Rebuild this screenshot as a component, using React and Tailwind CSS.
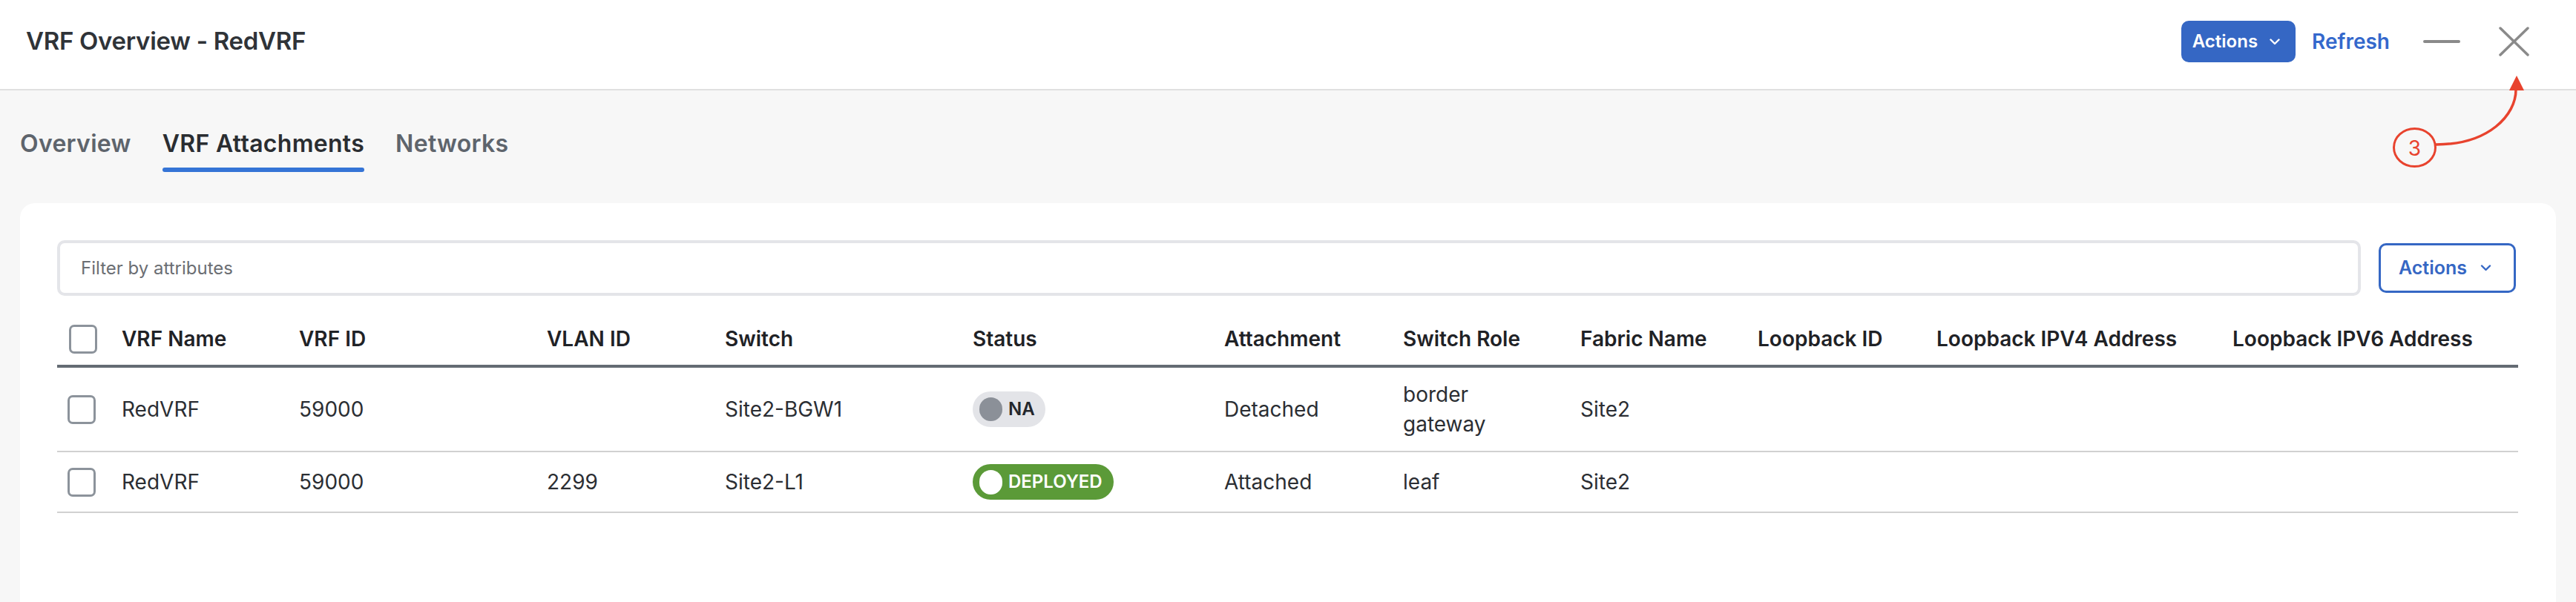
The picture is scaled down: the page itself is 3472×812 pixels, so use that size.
import React from "react";

// table columns, widths measured off the reference
const columns = [
  "VRF Name",
  "VRF ID",
  "VLAN ID",
  "Switch",
  "Status",
  "Attachment",
  "Switch Role",
  "Fabric Name",
  "Loopback ID",
  "Loopback IPV4 Address",
  "Loopback IPV6 Address",
];

const rows = [
  {
    id: 1,
    name: "RedVRF",
    vrfId: "59000",
    vlanId: "",
    sw: "Site2-BGW1",
    status: "NA",
    attachment: "Detached",
    role: "border gateway",
    fabric: "Site2",
  },
  {
    id: 2,
    name: "RedVRF",
    vrfId: "59000",
    vlanId: "2299",
    sw: "Site2-L1",
    status: "DEPLOYED",
    attachment: "Attached",
    role: "leaf",
    fabric: "Site2",
  },
];

const gridCols =
  "grid grid-cols-[71px_239px_334px_240px_334px_339px_241px_239px_239px_241px_399px_401px]";

const Chevron = ({ className }) => (
  <svg viewBox="0 0 14 9" className={className} fill="none">
    <polyline
      points="1.5,1.5 7,7 12.5,1.5"
      stroke="currentColor"
      strokeWidth="2.4"
      strokeLinecap="round"
      strokeLinejoin="round"
    />
  </svg>
);

const Checkbox = () => (
  <span className="block w-[38px] h-[39px] rounded-[7px] border-[3.5px] border-[#8c939b] bg-white" />
);

const StatusBadge = ({ status }) => {
  if (status === "DEPLOYED") {
    return (
      <span className="inline-flex items-center h-[48px] rounded-full bg-[#5b9a38] pl-[9px] pr-[15px] gap-[8px]">
        <span className="w-[31px] h-[33px] rounded-full bg-white" />
        <span className="text-[24px] font-semibold text-white leading-none">DEPLOYED</span>
      </span>
    );
  }
  return (
    <span className="inline-flex items-center h-[48px] rounded-full bg-[#e3e4e8] pl-[9px] pr-[14px] gap-[8px]">
      <span className="w-[31px] h-[32px] rounded-full bg-[#8b9098]" />
      <span className="text-[24px] font-semibold text-[#23262b] leading-none">{status}</span>
    </span>
  );
};

const Annotation = () => (
  <svg
    className="absolute left-[3215px] top-[95px] w-[200px] h-[140px] pointer-events-none"
    viewBox="0 0 200 140"
  >
    <ellipse cx="39.5" cy="104" rx="28" ry="25.5" fill="none" stroke="#e8432e" strokeWidth="3" />
    <text
      x="39.5"
      y="105"
      textAnchor="middle"
      dominantBaseline="central"
      fontFamily="Inter, sans-serif"
      fontSize="28"
      fill="#e8432e"
    >
      3
    </text>
    <path d="M68 100 C140 100 176 60 176 26" fill="none" stroke="#e8432e" strokeWidth="3.5" />
    <polygon points="177,7 167,27 187,27" fill="#e8432e" />
  </svg>
);

export default function App() {
  return (
    <div className="relative w-[3472px] h-[812px] overflow-hidden bg-[#f7f7f7] font-['Inter',sans-serif]">
      {/* header */}
      <div className="h-[122px] bg-white border-b-2 border-[#e0e0e0] flex items-center pl-[35px] pr-[63px] pb-[8px]">
        <h1 className="text-[33px] font-semibold text-[#2f3338] tracking-[-0.3px]">VRF Overview - RedVRF</h1>
        <div className="ml-auto flex items-center">
          <button className="h-[56px] rounded-[10px] bg-[#3567c4] text-white flex items-center pl-[15px] pr-[21px] gap-[16px]">
            <span className="text-[24px] font-semibold">Actions</span>
            <Chevron className="w-[14px] h-[9px]" />
          </button>
          <span className="ml-[22px] text-[28px] font-semibold text-[#3468cc]">Refresh</span>
          <span className="ml-[45px] w-[50px] h-[4px] rounded-full bg-[#8a8a8a]" />
          <svg viewBox="0 0 41 40" className="ml-[52px] w-[41px] h-[40px]">
            <line x1="2" y1="2" x2="39" y2="38" stroke="#8a8a8a" strokeWidth="3.5" strokeLinecap="round" />
            <line x1="39" y1="2" x2="2" y2="38" stroke="#8a8a8a" strokeWidth="3.5" strokeLinecap="round" />
          </svg>
        </div>
      </div>

      {/* tabs */}
      <div className="flex gap-[42px] pl-[27px] pt-[52px]">
        <div className="flex flex-col">
          <span className="text-[32px] leading-[40px] font-semibold tracking-[0.3px] text-[#5e646c]">Overview</span>
        </div>
        <div className="flex flex-col">
          <span className="text-[32px] leading-[40px] font-semibold tracking-[0.3px] text-[#2a2d31]">VRF Attachments</span>
          <span className="mt-[12px] h-[6px] rounded-full bg-[#3574d6]" />
        </div>
        <div className="flex flex-col">
          <span className="text-[32px] leading-[40px] font-semibold tracking-[0.3px] text-[#5e646c]">Networks</span>
        </div>
      </div>

      {/* card */}
      <div className="mx-[27px] mt-[42px] h-[600px] bg-white rounded-t-[20px] pl-[50px] pr-[51px] pt-[50px]">
        <div className="flex items-center gap-[24px] pr-[3px]">
          <div className="flex-1 h-[75px] rounded-[10px] border-4 border-[#e4e5e9] flex items-center pl-[28px]">
            <span className="text-[24px] text-[#6b6e73]">Filter by attributes</span>
          </div>
          <button className="h-[67px] rounded-[10px] border-[3px] border-[#3567c4] text-[#3567c4] flex items-center pl-[24px] pr-[30px] gap-[18px]">
            <span className="text-[25px] font-semibold">Actions</span>
            <Chevron className="w-[15px] h-[9px]" />
          </button>
        </div>

        <div className="mt-[23px] text-[28px] text-[#2b2e33]">
          <div className={`${gridCols} border-b-4 border-[#646b73]`}>
            <div className="pl-[16px] flex items-center py-[15px]">
              <Checkbox />
            </div>
            {columns.map((c) => (
              <div key={c} className="px-4 py-[15px] leading-[40px] font-semibold text-[#1f2226] whitespace-nowrap">
                {c}
              </div>
            ))}
          </div>

          {rows.map((r) => (
            <div key={r.id} className={`${gridCols} border-b-2 border-[#d1d1d1] items-center`}>
              <div className="pl-[14px] flex items-center py-4">
                <Checkbox />
              </div>
              <div className="px-4 py-4 leading-[40px]">{r.name}</div>
              <div className="px-4 py-4 leading-[40px]">{r.vrfId}</div>
              <div className="px-4 py-4 leading-[40px]">{r.vlanId}</div>
              <div className="px-4 py-4 leading-[40px]">{r.sw}</div>
              <div className="px-4 py-4 flex items-center">
                <StatusBadge status={r.status} />
              </div>
              <div className="px-4 py-4 leading-[40px]">{r.attachment}</div>
              <div className="px-4 py-4 leading-[40px] max-w-[160px]">{r.role}</div>
              <div className="px-4 py-4 leading-[40px]">{r.fabric}</div>
              <div className="px-4 py-4" />
              <div className="px-4 py-4" />
              <div className="px-4 py-4" />
            </div>
          ))}
        </div>
      </div>

      <Annotation />
    </div>
  );
}
